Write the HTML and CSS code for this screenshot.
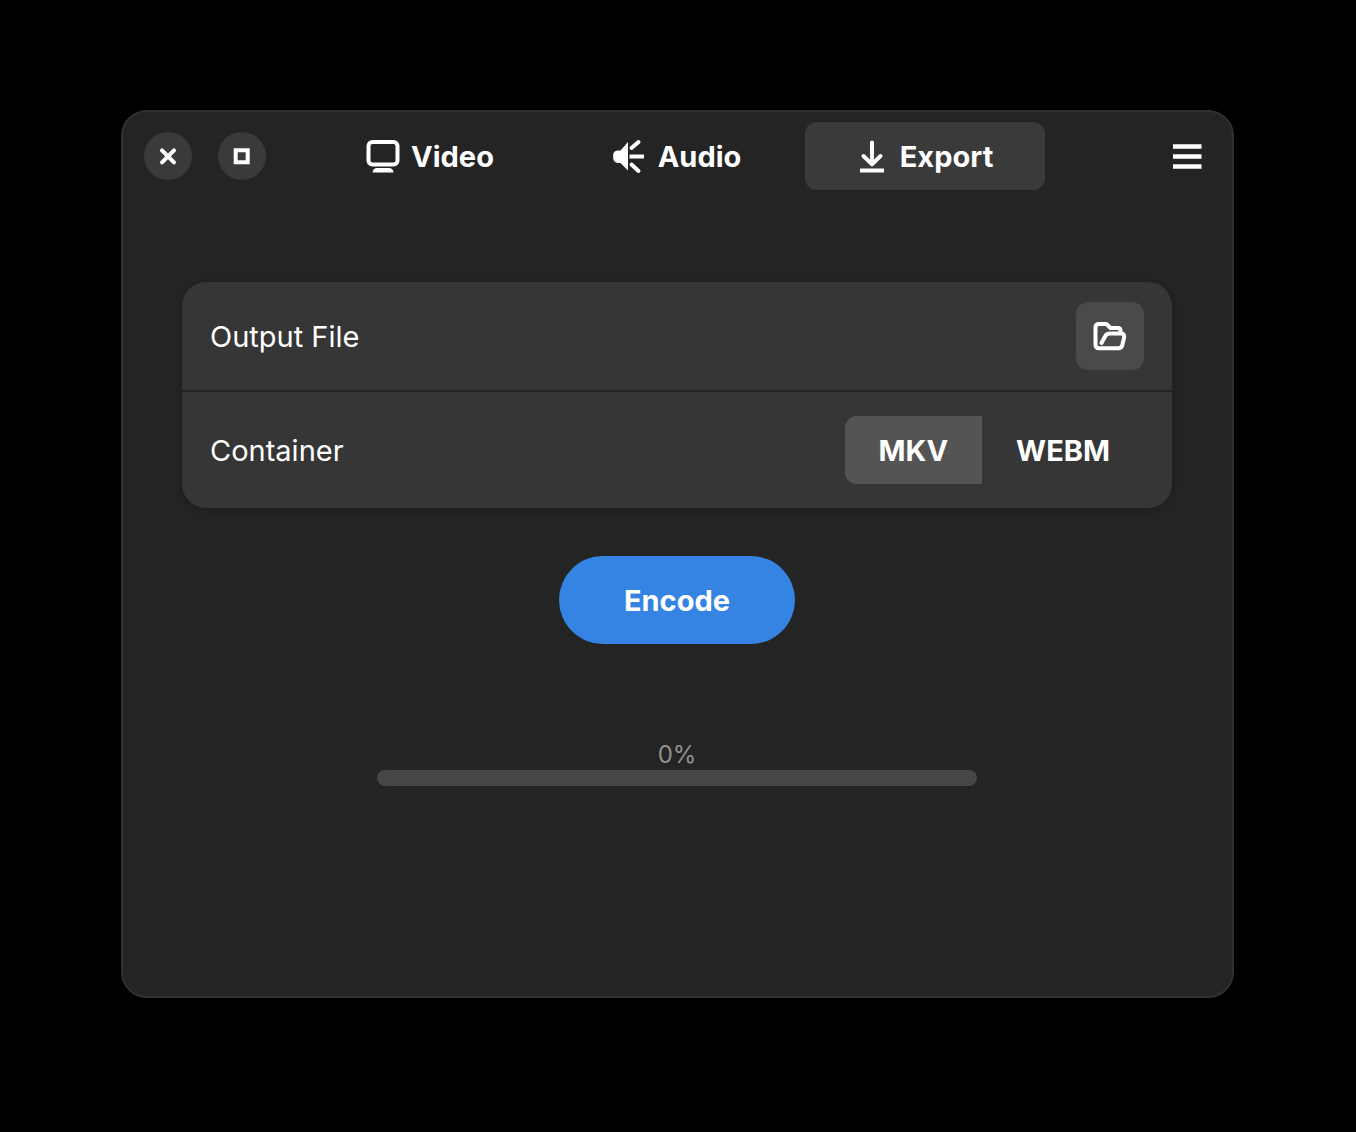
FILE: index.html
```html
<!DOCTYPE html>
<html lang="en">
<head>
<meta charset="utf-8">
<meta name="viewport" content="width=device-width, initial-scale=1">
<title>Export</title>
<link rel="stylesheet" href="styles.css">
</head>
<body>
<div class="window">
  <header class="headerbar">
    <div class="window-controls">
      <button class="round-button" type="button" aria-label="Close">
        <svg class="glyph" viewBox="0 0 32 32"><path d="M10 10.300L22 22.300M22 10.300L10 22.300" stroke-width="4" stroke-linecap="round"/></svg>
      </button>
      <button class="round-button" type="button" aria-label="Maximize">
        <svg class="glyph" viewBox="0 0 32 32"><path d="M9.700 10.200H21.700V22.200H9.700Z" stroke-width="4"/></svg>
      </button>
    </div>
    <nav class="switcher" aria-label="Pages">
      <button class="tab" type="button">
        <svg class="icon" viewBox="0 0 32 32"><rect x="1.500" y="2" width="29" height="22.500" rx="4" stroke-width="4"/><path class="solid" d="M5.500 32.500Q6 28 10 28H22Q26 28 26.500 32.500Z"/></svg>
        <span>Video</span>
      </button>
      <button class="tab" type="button">
        <svg class="icon" viewBox="0 0 32 32"><path class="solid" d="M14 2V30.500L6.500 23H3.500Q-.8 22 -.8 18V15Q-.8 11 3.500 10.500H6.500Z"/><path d="M17.500 8L24.500 2M17.500 24.500L24.500 31" stroke-width="4" stroke-linecap="round"/><path d="M15.500 16.500H30" stroke-width="4"/></svg>
        <span>Audio</span>
      </button>
      <button class="tab tab-active" type="button" aria-current="page">
        <svg class="icon" viewBox="0 0 32 32"><path d="M16 2.500V23M7.500 16L16 24.200L24.500 16" stroke-width="4" stroke-linecap="round"/><path d="M4 30.500H28" stroke-width="4"/></svg>
        <span>Export</span>
      </button>
    </nav>
    <button class="menu-button" type="button" aria-label="Main menu">
      <svg class="icon" viewBox="0 0 32 32"><path d="M2 6.500H30.500M2 16.500H30.500M2 26.500H30.500" stroke-width="4.400"/></svg>
    </button>
  </header>
  <main class="content">
    <section class="card">
      <div class="row">
        <label for="output-file">Output File</label>
        <button id="output-file" class="file-button" type="button" aria-label="Output File">
          <svg class="icon" viewBox="0 0 32 32"><path d="M26.500 12V10.500Q26.500 8 24 8H16.500L13 4.500Q12.300 4 11.500 4H5Q1.500 4 1.500 7.500V24.500Q1.500 28.300 5 28.300H24.500Q27.200 28.300 28.200 25.500L30 18Q30.800 13.500 27.300 13.500H16Q12.500 13.500 11 16.500L7.500 23" stroke-width="4" stroke-linecap="round"/></svg>
        </button>
      </div>
      <div class="row row-tall">
        <span id="container-label">Container</span>
        <div class="segmented" role="radiogroup" aria-labelledby="container-label">
          <label class="segment"><input type="radio" name="container" value="mkv" checked><span>MKV</span></label>
          <label class="segment"><input type="radio" name="container" value="webm"><span>WEBM</span></label>
        </div>
      </div>
    </section>
    <button class="encode-button" type="button">Encode</button>
    <div class="progress">
      <label for="encode-progress">0%</label>
      <progress id="encode-progress" value="0" max="100"></progress>
    </div>
  </main>
</div>
</body>
</html>
```
FILE: styles.css
```css
* {
  box-sizing: border-box;
}

body {
  margin: 0;
  min-height: 100vh;
  padding: 110px 122px 134px 121px;
  display: flex;
  background: #000;
  color: #fff;
  font: 400 29px/37px Inter, sans-serif;
  font-optical-sizing: none;
}

button {
  border: 0;
  margin: 0;
  padding: 0;
  display: flex;
  align-items: center;
  justify-content: center;
  background: none;
  color: inherit;
  font: inherit;
  font-optical-sizing: inherit;
  font-weight: 700;
}

.window {
  flex: 1;
  display: flex;
  flex-direction: column;
  border: 2px solid #303030;
  border-radius: 26px;
  background: #242424;
}

.headerbar {
  display: grid;
  grid-template-columns: 1fr auto 1fr;
  align-items: center;
  padding: 10px 21px;
}

.window-controls {
  display: flex;
  gap: 26px;
}

.round-button {
  width: 48px;
  height: 48px;
  border-radius: 50%;
  background: #3a3a3a;
}

.icon,
.glyph {
  width: 32px;
  height: 32px;
  flex: none;
  overflow: visible;
  fill: none;
  stroke: #fff;
  stroke-linejoin: round;
}

.glyph {
  stroke-linejoin: miter;
}

.solid {
  fill: #fff;
  stroke: none;
}

.switcher {
  display: flex;
  gap: 7px;
}

.tab {
  width: 240px;
  height: 68px;
  gap: 12px;
  border-radius: 12px;
}

.tab-active {
  background: #3a3a3a;
}

.menu-button {
  justify-self: end;
  width: 48px;
  height: 68px;
}

.content {
  display: flex;
  flex-direction: column;
  align-items: center;
  padding: 82px 60px 60px 59px;
}

.card {
  align-self: stretch;
  border-radius: 24px;
  background: #363636;
  box-shadow: 0 2px 6px 2px rgba(0, 0, 0, 0.14);
}

.row {
  display: flex;
  align-items: center;
  justify-content: space-between;
  min-height: 108px;
  padding: 0 28px;
}

.row-tall {
  min-height: 118px;
  border-top: 2px solid #242424;
}

.file-button {
  width: 68px;
  height: 68px;
  border-radius: 12px;
  background: #4a4a4a;
}

.segmented {
  display: flex;
  border-radius: 12px;
  overflow: hidden;
  font-weight: 700;
}

.segment {
  position: relative;
}

.segment input {
  position: absolute;
  inset: 0;
  margin: 0;
  opacity: 0;
}

.segment span {
  display: flex;
  align-items: center;
  height: 68px;
  padding: 0 34px;
}

.segment input:checked + span {
  background: #545454;
}

.encode-button {
  width: 236px;
  height: 88px;
  margin-top: 48px;
  border-radius: 44px;
  background: #3584e4;
}

.progress {
  display: flex;
  flex-direction: column;
  align-items: center;
  width: 600px;
  max-width: 100%;
  margin-top: 96px;
  color: #919191;
  font-size: 24px;
  line-height: 30px;
}

progress {
  appearance: none;
  display: block;
  width: 100%;
  height: 16px;
  border: 0;
  border-radius: 8px;
  overflow: hidden;
  background: #464646;
}

progress::-webkit-progress-bar {
  background: #464646;
}

progress::-webkit-progress-value {
  background: #3584e4;
}
```
